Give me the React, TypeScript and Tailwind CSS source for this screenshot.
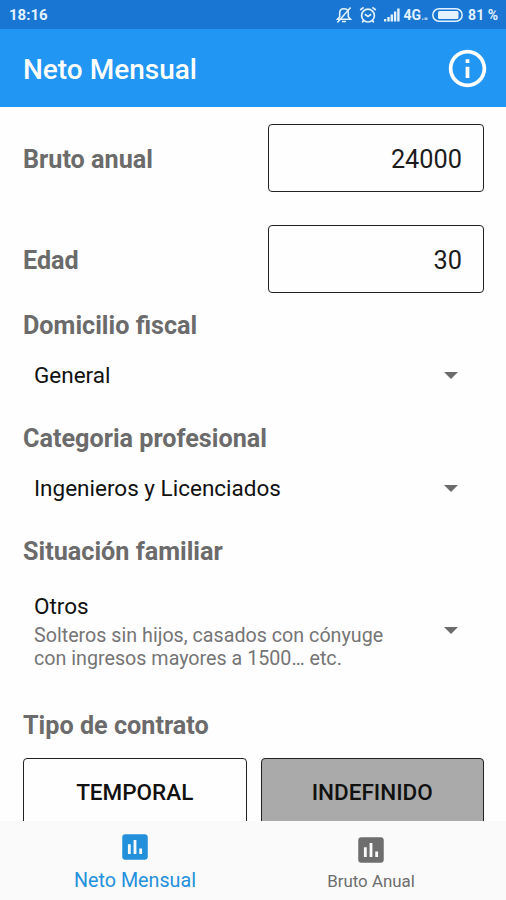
import React from 'react';
import { MdInfoOutline, MdInsertChart } from 'react-icons/md';

interface NumberFieldProps {
  label: string;
  value: string;
}

interface SelectFieldProps {
  label: string;
  value: string;
  description?: string[];
}

const numberFields: NumberFieldProps[] = [
  { label: 'Bruto anual', value: '24000' },
  { label: 'Edad', value: '30' }
];

const selectFields: SelectFieldProps[] = [
  { label: 'Domicilio fiscal', value: 'General' },
  { label: 'Categoria profesional', value: 'Ingenieros y Licenciados' },
  {
    label: 'Situación familiar',
    value: 'Otros',
    description: ['Solteros sin hijos, casados con cónyuge', 'con ingresos mayores a 1500… etc.']
  }
];

function StatusBar() {
  return (
    <div className="flex h-[29px] items-center justify-between bg-[#1976d2] pr-2 pl-[9px] text-[#e3f2fd]">
      <span className="pt-px text-[15px] leading-none font-bold">18:16</span>
      <div className="flex items-center">
        {/* muted bell */}
        <svg className="h-[18px] w-[16px]" viewBox="0 0 16 18" fill="none" stroke="currentColor" strokeWidth="1.6">
          <path d="M1.500 13.200h13l-2.200-2.400V7c0-2.500-1.700-4.200-4.300-4.200S3.700 4.500 3.700 7v3.800z" />
          <path d="M6 15.500h4M14.600 1.500 1.400 16.500" />
        </svg>
        {/* alarm */}
        <svg className="ml-[7px] h-[18px] w-[18px]" viewBox="0 0 18 18" fill="none" stroke="currentColor" strokeWidth="1.700">
          <circle cx="9" cy="9.600" r="6.400" />
          <path d="M1.200 4 4.600 1.400M16.800 4l-3.400-2.600M5.800 8.200 9 10.400l3.200-2.200M4.600 14.600l-1.400 1.800M13.400 14.600l1.400 1.800" />
        </svg>
        {/* signal */}
        <svg className="ml-[7px] h-[14px] w-[16px]" viewBox="0 0 16 14" fill="currentColor">
          <path d="M0 11h2.300v2.500H0zM3.300 9h2.400v4.500H3.300zM6.600 6.500H9v7H6.600zM9.900 3.500h2.400v10H9.900zM13.200.5h2.400v13h-2.400z" />
        </svg>
        <span className="ml-[4px] pt-px text-[14px] leading-none font-bold">4G</span>
        <svg className="ml-px h-[14px] w-[6px]" viewBox="0 0 6 14" fill="currentColor">
          <path d="M0 10.500h1.500V12H0zM2.500 9.500h3V12h-3z" opacity="0.7" />
        </svg>
        {/* battery */}
        <svg className="ml-[4px] h-[14px] w-[31px]" viewBox="0 0 31 14" fill="none">
          <rect x="0.800" y="0.800" width="29.400" height="12.400" rx="6.200" stroke="currentColor" strokeWidth="1.500" />
          <rect x="6" y="3" width="20.500" height="8" rx="1.500" fill="currentColor" />
        </svg>
        <span className="ml-[5px] pt-px text-[14px] leading-none font-bold">81 %</span>
      </div>
    </div>
  );
}

function NumberField({ label, value }: NumberFieldProps) {
  return (
    <div className="flex h-[68px] items-center justify-between">
      <label className="pt-[3px] text-[25.200px] leading-[30px] font-bold text-[#6b6b6b]">{label}</label>
      <div className="flex h-full w-[216px] items-center justify-end rounded-[4px] border border-[#222] pt-[3px] pr-[21px] text-[25.300px] text-[#1c1c1c]">
        {value}
      </div>
    </div>
  );
}

function SelectField({ label, value, description }: SelectFieldProps) {
  return (
    <div>
      <h2 className="text-[25.200px] leading-[30px] font-bold text-[#6b6b6b]">{label}</h2>
      <div className={`flex items-center justify-between pr-[26px] pl-[11px] ${description ? 'h-[126px]' : 'h-[68px]'}`}>
        <div className="text-[22.500px] leading-[30px] text-[#111]">
          <p>{value}</p>
          {description && (
            <div className="pt-[3px] text-[19.700px] leading-[23px] text-[#757575]">
              {description.map((line) => (
                <p key={line}>{line}</p>
              ))}
            </div>
          )}
        </div>
        <svg className="h-[7px] w-[14px]" viewBox="0 0 14 7" fill="#6b6b6b">
          <path d="M0 0h14L7 7z" />
        </svg>
      </div>
    </div>
  );
}

export default function App() {
  return (
    <div className="flex h-[900px] w-[506px] flex-col overflow-hidden bg-[#fefefe] font-['Roboto',sans-serif]">
      <StatusBar />
      <header className="flex h-[78px] items-center justify-between bg-[#2196f3] pr-[16px] pl-[23px] text-white">
        <h1 className="pt-[4px] text-[28px] font-medium">Neto Mensual</h1>
        <MdInfoOutline className="h-[45px] w-[45px]" />
      </header>

      <main className="h-[714px] overflow-hidden pt-[17px] pr-[22px] pl-[23px]">
        <div className="flex flex-col gap-[33px]">
          {numberFields.map((field) => (
            <NumberField key={field.label} {...field} />
          ))}
        </div>

        <div className="mt-[18px] flex flex-col gap-[15px]">
          {selectFields.map((field) => (
            <SelectField key={field.label} {...field} />
          ))}
        </div>

        <h2 className="mt-[18px] text-[25.200px] leading-[30px] font-bold text-[#6b6b6b]">Tipo de contrato</h2>
        <div className="mt-[17px] grid grid-cols-2 gap-[14px] text-[22.500px] font-medium text-[#111]">
          <button className="h-[70px] rounded-[4px] border border-[#222]">TEMPORAL</button>
          <button className="h-[70px] rounded-[4px] border border-[#222] bg-[#aaa]">INDEFINIDO</button>
        </div>
      </main>

      <nav className="flex h-[79px] bg-[#fafafa] px-[17px]">
        <div className="flex flex-1 flex-col items-center pt-[9px] text-[#2390dc]">
          <MdInsertChart className="h-[34px] w-[34px]" />
          <span className="text-[19.700px] leading-[33px]">Neto Mensual</span>
        </div>
        <div className="flex flex-1 flex-col items-center pt-[12px] text-[#6e6e6e]">
          <MdInsertChart className="h-[34px] w-[34px]" />
          <span className="text-[16.900px] leading-[28px]">Bruto Anual</span>
        </div>
      </nav>
    </div>
  );
}
